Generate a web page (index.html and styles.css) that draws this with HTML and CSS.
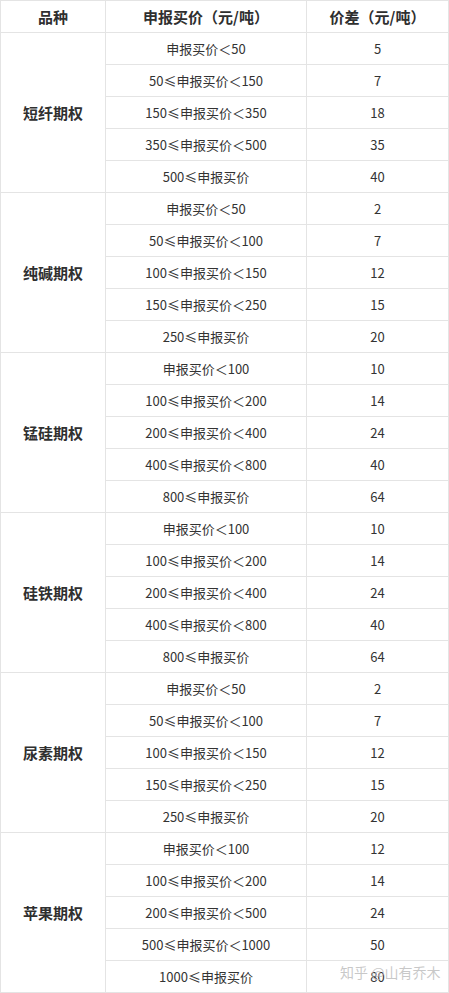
FILE: index.html
```html
<!DOCTYPE html>
<html lang="zh-CN">
<head>
<meta charset="utf-8">
<title>期权价差表</title>
<link rel="stylesheet" href="styles.css">
</head>
<body>
<div class="page">
<table class="spread">
  <colgroup>
    <col class="c1">
    <col class="c2">
    <col class="c3">
  </colgroup>
  <thead>
    <tr><th>品种</th><th>申报买价（元/吨）</th><th>价差（元/吨）</th></tr>
  </thead>
  <tbody>
    <tr><td class="kind" rowspan="5">短纤期权</td><td>申报买价＜50</td><td class="num">5</td></tr>
    <tr><td>50≤申报买价＜150</td><td class="num">7</td></tr>
    <tr><td>150≤申报买价＜350</td><td class="num">18</td></tr>
    <tr><td>350≤申报买价＜500</td><td class="num">35</td></tr>
    <tr><td>500≤申报买价</td><td class="num">40</td></tr>

    <tr><td class="kind" rowspan="5">纯碱期权</td><td>申报买价＜50</td><td class="num">2</td></tr>
    <tr><td>50≤申报买价＜100</td><td class="num">7</td></tr>
    <tr><td>100≤申报买价＜150</td><td class="num">12</td></tr>
    <tr><td>150≤申报买价＜250</td><td class="num">15</td></tr>
    <tr><td>250≤申报买价</td><td class="num">20</td></tr>

    <tr><td class="kind" rowspan="5">锰硅期权</td><td>申报买价＜100</td><td class="num">10</td></tr>
    <tr><td>100≤申报买价＜200</td><td class="num">14</td></tr>
    <tr><td>200≤申报买价＜400</td><td class="num">24</td></tr>
    <tr><td>400≤申报买价＜800</td><td class="num">40</td></tr>
    <tr><td>800≤申报买价</td><td class="num">64</td></tr>

    <tr><td class="kind" rowspan="5">硅铁期权</td><td>申报买价＜100</td><td class="num">10</td></tr>
    <tr><td>100≤申报买价＜200</td><td class="num">14</td></tr>
    <tr><td>200≤申报买价＜400</td><td class="num">24</td></tr>
    <tr><td>400≤申报买价＜800</td><td class="num">40</td></tr>
    <tr><td>800≤申报买价</td><td class="num">64</td></tr>

    <tr><td class="kind" rowspan="5">尿素期权</td><td>申报买价＜50</td><td class="num">2</td></tr>
    <tr><td>50≤申报买价＜100</td><td class="num">7</td></tr>
    <tr><td>100≤申报买价＜150</td><td class="num">12</td></tr>
    <tr><td>150≤申报买价＜250</td><td class="num">15</td></tr>
    <tr><td>250≤申报买价</td><td class="num">20</td></tr>

    <tr><td class="kind" rowspan="5">苹果期权</td><td>申报买价＜100</td><td class="num">12</td></tr>
    <tr><td>100≤申报买价＜200</td><td class="num">14</td></tr>
    <tr><td>200≤申报买价＜500</td><td class="num">24</td></tr>
    <tr><td>500≤申报买价＜1000</td><td class="num">50</td></tr>
    <tr><td>1000≤申报买价</td><td class="num">80</td></tr>
  </tbody>
</table>
<div class="watermark">知乎 <span class="at">@</span>山有乔木</div>
</div>
</body>
</html>
```
FILE: styles.css
```css
html, body {
  margin: 0;
  padding: 0;
  background: #ffffff;
}

body {
  font-family: "Noto Sans CJK SC", "Noto Sans", sans-serif;
  color: #333333;
}

.page {
  position: relative;
  width: 449px;
}

.spread {
  border-collapse: collapse;
  table-layout: fixed;
  width: 448px;
}

.c1 { width: 105px; }
.c2 { width: 201px; }
.c3 { width: 142px; }

.spread th,
.spread td {
  border: 1px solid #e4e4e4;
  height: 31px;
  padding: 0;
  text-align: center;
  vertical-align: middle;
  line-height: 20px;
}

.spread th {
  font-size: 15px;
  font-weight: 700;
  color: #2f2f2f;
}

.spread td {
  font-size: 13px;
  color: #333333;
}

.spread td.kind {
  font-size: 15px;
  font-weight: 700;
  color: #2f2f2f;
}

.watermark {
  position: absolute;
  left: 340px;
  top: 962px;
  font-size: 14px;
  line-height: 20px;
  color: rgba(190, 190, 190, 0.85);
  letter-spacing: 0;
  white-space: nowrap;
}

.watermark .at {
  font-size: 14px;
}
```
